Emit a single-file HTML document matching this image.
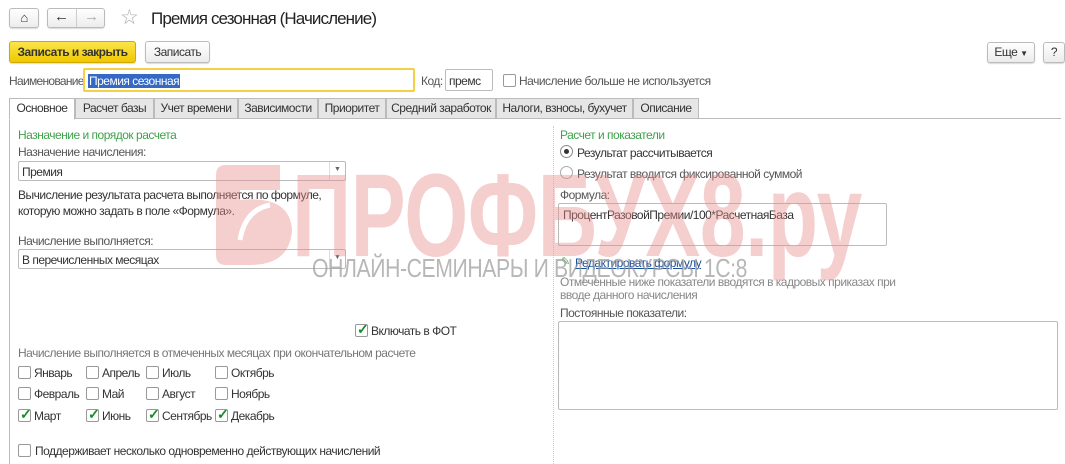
<!DOCTYPE html>
<html><head><meta charset="utf-8"><style>
*{box-sizing:border-box;margin:0;padding:0}
body{width:1065px;height:464px;overflow:hidden;background:#fff;font-family:"Liberation Sans",Arial,sans-serif;font-size:12px;letter-spacing:-0.5px;color:#333;position:relative}
.a{position:absolute;white-space:nowrap}
.btn{position:absolute;border:1px solid #bbb;border-radius:3px;background:linear-gradient(#fff,#ececec);box-shadow:0 1px 1px rgba(0,0,0,.15);text-align:center;font-size:12px;color:#333;white-space:nowrap}
.inp{position:absolute;border:1px solid #bbb;background:#fff;border-radius:2px}
.tab{position:absolute;top:98px;height:21px;border:1px solid #bbb;background:#e6e6e6;font-size:12px;text-align:center;line-height:19px;color:#333;white-space:nowrap;overflow:hidden}
.cb{position:absolute;width:13px;height:13px;border:1px solid #999;border-radius:2px;background:#fff}
.g{color:#555}
.green{color:#3fa14b}
.ck{position:absolute;left:1px;top:-4px;color:#1a8a2a;font-size:14px;font-weight:bold}
</style></head><body>
<div class="btn" style="left:9px;top:8px;width:30px;height:20px;font-size:13px;line-height:17px">&#8962;</div>
<div class="btn" style="left:47px;top:8px;width:58px;height:20px"></div>
<div class="a" style="left:76px;top:9px;width:1px;height:18px;background:#ccc"></div>
<div class="a" style="left:54px;top:8px;font-size:15px;font-weight:bold">&#8592;</div>
<div class="a" style="left:84px;top:8px;font-size:15px;color:#aaa">&#8594;</div>
<div class="a" style="left:120px;top:5px;font-size:21px;color:#aaa">&#9734;</div>
<div class="a" style="left:151px;top:9px;font-size:17px;letter-spacing:-0.9px;color:#222">Премия сезонная (Начисление)</div>
<div class="btn" style="left:9px;top:41px;width:127px;height:22px;line-height:20px;background:linear-gradient(#fbe54a,#f0c800);border-color:#d0aa00;font-weight:bold;color:#333">Записать и закрыть</div>
<div class="btn" style="left:145px;top:41px;width:65px;height:22px;line-height:20px">Записать</div>
<div class="btn" style="left:987px;top:42px;width:48px;height:21px;line-height:19px">Еще <span style="font-size:8px">&#9660;</span></div>
<div class="btn" style="left:1043px;top:42px;width:22px;height:21px;line-height:19px">?</div>
<div class="a g" style="left:9px;top:74px;letter-spacing:-0.7px">Наименование:</div>
<div class="inp" style="left:83px;top:68px;width:332px;height:24px;border:2px solid #f2d147"></div>
<div class="a" style="left:88px;top:74px;background:#3469c5;color:#fff;padding:0 1px">Премия сезонная</div>
<div class="a g" style="left:421px;top:74px">Код:</div>
<div class="inp" style="left:445px;top:69px;width:48px;height:22px"></div>
<div class="a" style="left:449px;top:74px">премс</div>
<div class="cb" style="left:503px;top:74px"></div>
<div class="a g" style="left:519px;top:74px">Начисление больше не используется</div>
<div class="a" style="left:9px;top:118px;width:1052px;height:1px;background:#bbb"></div>
<div class="a" style="left:9px;top:118px;width:1px;height:346px;background:#bbb"></div>
<div class="tab" style="left:9px;width:66px;background:#fff;border-bottom-color:#fff;height:22px">Основное</div>
<div class="tab" style="left:75px;width:79px">Расчет базы</div>
<div class="tab" style="left:154px;width:84px">Учет времени</div>
<div class="tab" style="left:238px;width:80px">Зависимости</div>
<div class="tab" style="left:318px;width:68px">Приоритет</div>
<div class="tab" style="left:386px;width:110px">Средний заработок</div>
<div class="tab" style="left:496px;width:137px">Налоги, взносы, бухучет</div>
<div class="tab" style="left:633px;width:66px">Описание</div>
<div class="a green" style="left:18px;top:128px">Назначение и порядок расчета</div>
<div class="a g" style="left:18px;top:145px">Назначение начисления:</div>
<div class="inp" style="left:18px;top:161px;width:328px;height:20px"></div>
<div class="a" style="left:22px;top:165px">Премия</div>
<div class="a" style="left:329px;top:162px;width:1px;height:18px;background:#ddd"></div>
<div class="a" style="left:334px;top:166px;font-size:7px;color:#666">&#9660;</div>
<div class="a" style="left:18px;top:187px;line-height:16px">Вычисление результата расчета выполняется по формуле,<br>которую можно задать в поле «Формула».</div>
<div class="a g" style="left:18px;top:234px">Начисление выполняется:</div>
<div class="inp" style="left:18px;top:249px;width:328px;height:20px"></div>
<div class="a" style="left:22px;top:253px">В перечисленных месяцах</div>
<div class="a" style="left:329px;top:250px;width:1px;height:18px;background:#ddd"></div>
<div class="a" style="left:334px;top:254px;font-size:7px;color:#666">&#9660;</div>
<div class="cb" style="left:355px;top:324px"><span class="ck">&#10003;</span></div>
<div class="a" style="left:371px;top:324px">Включать в ФОТ</div>
<div class="a g" style="left:18px;top:346px;color:#777">Начисление выполняется в отмеченных месяцах при окончательном расчете</div>
<div class="cb" style="left:18px;top:366px"></div><div class="a" style="left:34px;top:366px">Январь</div>
<div class="cb" style="left:86px;top:366px"></div><div class="a" style="left:102px;top:366px">Апрель</div>
<div class="cb" style="left:146px;top:366px"></div><div class="a" style="left:162px;top:366px">Июль</div>
<div class="cb" style="left:215px;top:366px"></div><div class="a" style="left:231px;top:366px">Октябрь</div>
<div class="cb" style="left:18px;top:387px"></div><div class="a" style="left:34px;top:387px">Февраль</div>
<div class="cb" style="left:86px;top:387px"></div><div class="a" style="left:102px;top:387px">Май</div>
<div class="cb" style="left:146px;top:387px"></div><div class="a" style="left:162px;top:387px">Август</div>
<div class="cb" style="left:215px;top:387px"></div><div class="a" style="left:231px;top:387px">Ноябрь</div>
<div class="cb" style="left:18px;top:409px"><span class="ck">&#10003;</span></div><div class="a" style="left:34px;top:409px">Март</div>
<div class="cb" style="left:86px;top:409px"><span class="ck">&#10003;</span></div><div class="a" style="left:102px;top:409px">Июнь</div>
<div class="cb" style="left:146px;top:409px"><span class="ck">&#10003;</span></div><div class="a" style="left:162px;top:409px">Сентябрь</div>
<div class="cb" style="left:215px;top:409px"><span class="ck">&#10003;</span></div><div class="a" style="left:231px;top:409px">Декабрь</div>
<div class="cb" style="left:18px;top:444px"></div><div class="a" style="left:35px;top:444px">Поддерживает несколько одновременно действующих начислений</div>
<div class="a" style="left:553px;top:126px;height:338px;border-left:1px dotted #ccc"></div>
<div class="a green" style="left:560px;top:128px">Расчет и показатели</div>
<div class="a" style="left:560px;top:145px;width:13px;height:13px;border:1px solid #888;border-radius:50%"><div style="position:absolute;left:3px;top:3px;width:5px;height:5px;border-radius:50%;background:#333"></div></div>
<div class="a" style="left:577px;top:146px">Результат рассчитывается</div>
<div class="a" style="left:560px;top:166px;width:13px;height:13px;border:1px solid #aaa;border-radius:50%"></div>
<div class="a g" style="left:577px;top:167px">Результат вводится фиксированной суммой</div>
<div class="a g" style="left:560px;top:188px">Формула:</div>
<div class="inp" style="left:558px;top:203px;width:329px;height:43px"></div>
<div class="a" style="left:563px;top:208px">ПроцентРазовойПремии/100*РасчетнаяБаза</div>
<div class="a" style="left:561px;top:255px;color:#6a6;font-size:11px">&#9998;</div>
<div class="a" style="left:575px;top:256px;color:#1a4fa0;text-decoration:underline">Редактировать формулу</div>
<div class="a" style="left:560px;top:276px;color:#888;line-height:13px">Отмеченные ниже показатели вводятся в кадровых приказах при<br>вводе данного начисления</div>
<div class="a g" style="left:560px;top:306px">Постоянные показатели:</div>
<div class="inp" style="left:558px;top:321px;width:500px;height:89px"></div>
<svg class="a" style="left:0;top:0" width="1065" height="464">
<g opacity="0.42">
<path d="M216 175 Q216 165 226 165 L280 165 L280 190 L240 190 L240 200 Q290 195 292 230 Q290 265 250 265 L226 265 Q216 265 216 255 Z" fill="#e88c8c"/>
<path d="M240 240 Q245 210 270 205" stroke="#fff" stroke-width="5" fill="none"/>
<text x="292" y="256" font-family="Liberation Sans" font-weight="bold" font-size="118" fill="#e88c8c" textLength="570" lengthAdjust="spacingAndGlyphs">ПРОФБУХ8.ру</text>
</g>
<text x="312" y="277" font-family="Liberation Sans" font-size="26" fill="#999" opacity="0.7" textLength="435" lengthAdjust="spacingAndGlyphs">ОНЛАЙН-СЕМИНАРЫ И ВИДЕОКУРСЫ 1С:8</text>
</svg>
</body></html>
